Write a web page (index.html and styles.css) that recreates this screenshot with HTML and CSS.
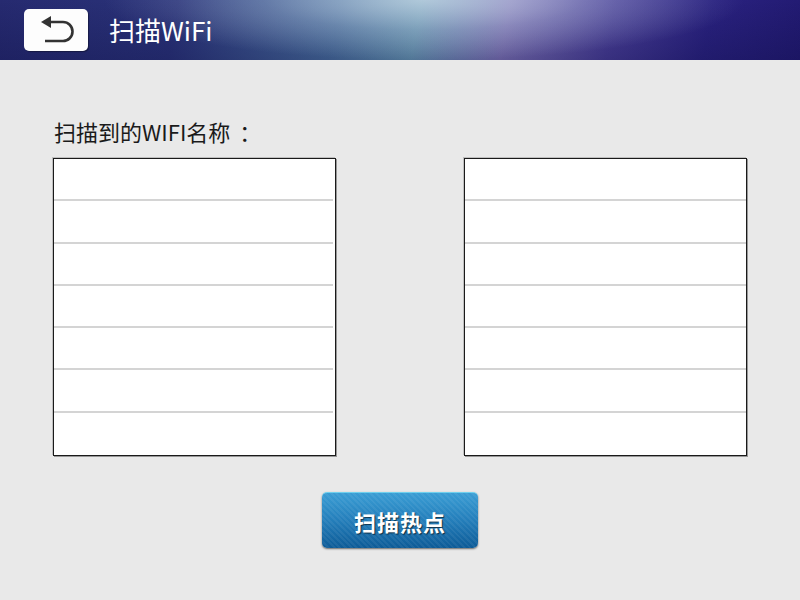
FILE: index.html
```html
<!DOCTYPE html>
<html lang="zh-CN">
<head>
<meta charset="utf-8">
<title>扫描WiFi</title>
<link rel="stylesheet" href="styles.css">
</head>
<body>
<header class="topbar">
  <button class="back-btn" aria-label="返回">
    <svg width="40" height="30" viewBox="0 0 40 30">
      <path d="M14 6 H27 A9.5 9.5 0 0 1 27 25 H9" fill="none" stroke="#333" stroke-width="2.6"/>
      <polygon points="5,6 15,0 15,12" fill="#333"/>
    </svg>
  </button>
  <h1 class="title">扫描WiFi</h1>
</header>
<main class="content">
  <p class="label">扫描到的WIFI名称<span class="colon">：</span></p>
  <div class="lists">
    <ul class="wifi-list">
      <li></li><li></li><li></li><li></li><li></li><li></li><li></li>
    </ul>
    <ul class="wifi-list right">
      <li></li><li></li><li></li><li></li><li></li><li></li><li></li>
    </ul>
  </div>
  <div class="actions">
    <button class="scan-btn">扫描热点</button>
  </div>
</main>
</body>
</html>
```

FILE: styles.css
```css
* { box-sizing: border-box; }

html, body {
  margin: 0;
  padding: 0;
  width: 800px;
  height: 600px;
  overflow: hidden;
  background: #e9e9e9;
  font-family: "Noto Sans CJK SC", "Noto Sans", sans-serif;
}

.topbar {
  height: 60px;
  display: flex;
  align-items: center;
  padding-left: 24px;
  background:
    radial-gradient(ellipse 320px 60px at 53% 0%, rgba(205,218,232,0.7) 0%, rgba(185,200,222,0.32) 50%, rgba(160,170,210,0) 100%),
    linear-gradient(to bottom, rgba(0,0,0,0) 0%, rgba(10,10,60,0.28) 100%),
    linear-gradient(100deg, #262a70 0%, #2a3379 22%, #4b73a0 42%, #6b9fb8 52%, #8378ba 63%, #4a3f98 76%, #2a2280 88%, #221a72 100%);
}

.back-btn {
  width: 64px;
  height: 42px;
  border: none;
  border-radius: 5px;
  background: #fdfdfd;
  box-shadow: 1px 1px 1px rgba(0,0,0,0.35);
  display: flex;
  align-items: center;
  justify-content: center;
  padding: 0;
}

.back-btn svg {
  display: block;
  margin-top: 1px;
}

.title {
  margin: 0 0 0 21px;
  color: #ffffff;
  font-size: 26px;
  font-weight: normal;
  line-height: 1;
}

.content {
  padding: 0 53px;
}

.label {
  margin: 0;
  padding-top: 56px;
  height: 98px;
  font-size: 22px;
  line-height: 30px;
  color: #1a1a1a;
  padding-left: 1px;
}

.label .colon {
  display: inline-block;
  margin-left: 9px;
}

.lists {
  display: flex;
  justify-content: space-between;
}

.wifi-list {
  list-style: none;
  margin: 0;
  padding: 0;
  width: 283px;
  height: 298px;
  background: #ffffff;
  border: 1px solid #1a1a1a;
  box-shadow: -1px -1px 0 rgba(0,0,0,0.18), 1px 1px 0 rgba(0,0,0,0.35);
  display: grid;
  grid-template-rows: repeat(7, 1fr);
}

.wifi-list li {
  border-bottom: 2px solid #d4d4d4;
  margin-right: 2px;
}

.wifi-list.right li {
  margin-right: 0;
}

.wifi-list li:last-child {
  border-bottom: none;
}

.actions {
  display: flex;
  justify-content: center;
  padding-top: 36px;
}

.scan-btn {
  width: 156px;
  height: 56px;
  border: none;
  border-top: 1px solid #6fd0ee;
  border-radius: 5px;
  color: #ffffff;
  font-family: "Noto Sans CJK SC", sans-serif;
  font-size: 22px;
  font-weight: bold;
  letter-spacing: 1px;
  text-shadow: 1px 1px 1px rgba(0,0,0,0.6);
  background:
    repeating-linear-gradient(45deg, rgba(255,255,255,0.06) 0 2px, rgba(255,255,255,0) 2px 4px),
    linear-gradient(to bottom, #3a9dd4 0%, #2681bd 45%, #0d5b97 100%);
  box-shadow: 0 1px 2px rgba(0,0,0,0.55);
  padding: 0;
}
```
